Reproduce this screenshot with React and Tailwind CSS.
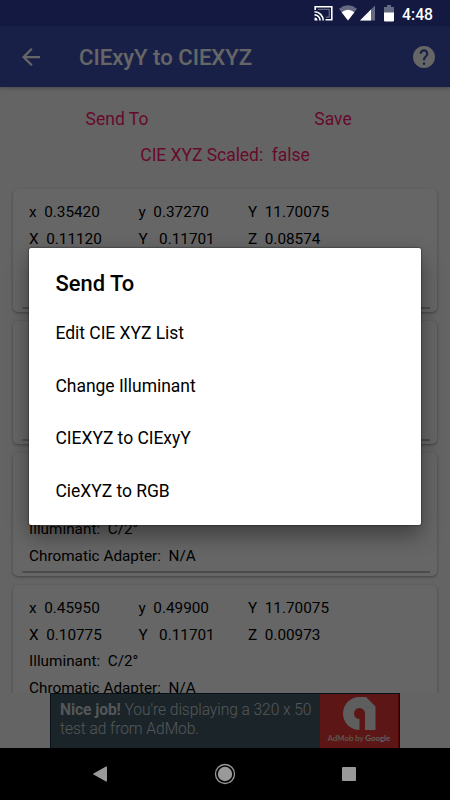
const samples = [
  { x: "0.35420", y: "0.37270", lum: "11.70075", X: "0.11120", Y: "0.11701", Z: "0.08574" },
  { x: "0.37790", y: "0.24530", lum: "11.70075", X: "0.18025", Y: "0.11701", Z: "0.17973" },
  { x: "0.30920", y: "0.33110", lum: "11.70075", X: "0.10927", Y: "0.11701", Z: "0.12712" },
  { x: "0.45950", y: "0.49900", lum: "11.70075", X: "0.10775", Y: "0.11701", Z: "0.00973" },
];

const sendOptions = [
  "Edit CIE XYZ List",
  "Change Illuminant",
  "CIEXYZ to CIExyY",
  "CieXYZ to RGB",
];

function StatusBar() {
  return (
    <div className="flex h-[26px] shrink-0 items-center justify-end bg-[#131940] pr-[17px] text-white">
      <svg className="mr-[6px] h-[16px] w-[19px]" viewBox="0 0 19 16" fill="none" stroke="currentColor">
        <path d="M1.2 5V1.7h16.6v13H11.5" strokeWidth="1.6" />
        <path d="M4 4.3h11.2v7.8h-3.4" strokeWidth=".7" opacity=".6" />
        <path d="M.5 6.8a8.7 8.7 0 0 1 8.7 8.7M.5 9.9a5.6 5.6 0 0 1 5.6 5.6" strokeWidth="1.6" />
        <path d="M.5 12.5a3 3 0 0 1 3 3h-3z" fill="currentColor" stroke="none" />
      </svg>
      <svg className="mr-[3px] h-[16px] w-[18px]" viewBox="0 0 18 16" fill="currentColor">
        <path d="M0 3.7Q9-3.2 18 3.7L9 15.5z" opacity=".35" />
        <path d="M2.6 7.2Q9 2.2 15.4 7.2L9 15.5z" />
      </svg>
      <svg className="mr-[9px] h-[16px] w-[15px]" viewBox="0 0 15 16" fill="currentColor">
        <path d="M0 15.5L15 .5v15z" opacity=".35" />
        <path d="M0 15.5L11 4.5v11z" />
      </svg>
      <svg className="mr-[8px] h-[17px] w-[10px]" viewBox="0 0 10 17" fill="currentColor">
        <path d="M3 0h4v2h3v6H0V2h3z" opacity=".35" />
        <path d="M0 7.5h10v8a1 1 0 0 1-1 1H1a1 1 0 0 1-1-1z" />
      </svg>
      <span className="pt-[3px] text-[15.7px] leading-none font-medium">4:48</span>
    </div>
  );
}

function AppBar() {
  return (
    <header className="relative z-10 flex h-[61px] shrink-0 items-center bg-[#3f51b5] pr-[15px] pl-[22px] text-white shadow-[0_2px_3px_rgba(0,0,0,0.2)]">
      <svg className="h-[18px] w-[18px]" viewBox="4 4 16 16" fill="currentColor">
        <path d="M20 11H7.83l5.59-5.59L12 4l-8 8 8 8 1.41-1.41L7.83 13H20v-2z" />
      </svg>
      <h1 className="ml-[39px] pt-[3px] text-[22.1px] font-medium">CIExyY to CIEXYZ</h1>
      <svg className="ml-auto h-[22px] w-[22px]" viewBox="2 2 20 20" fill="currentColor">
        <path d="M12 2C6.48 2 2 6.48 2 12s4.48 10 10 10 10-4.48 10-10S17.52 2 12 2zm1 17h-2v-2h2v2zm2.07-7.75l-.9.92C13.45 12.9 13 13.5 13 15h-2v-.5c0-1.1.45-2.1 1.17-2.83l1.24-1.26c.37-.36.59-.86.59-1.41 0-1.1-.9-2-2-2s-2 .9-2 2H8c0-2.21 1.79-4 4-4s4 1.79 4 4c0 .88-.36 1.68-.93 2.25z" />
      </svg>
    </header>
  );
}

function SampleCard({ sample }) {
  return (
    <div className="h-[123px] shrink-0 rounded-[5px] bg-white px-[7px] pb-[5px] shadow-[0_1px_3px_rgba(0,0,0,0.35)]">
      <div className="h-full px-[9px] pt-[10px] text-[15.3px] leading-[26.5px] whitespace-pre text-black shadow-[0_2px_1px_-0.5px_rgba(0,0,0,0.25)]">
        <div className="grid grid-cols-[109.5px_109.5px_1fr]">
          <span>{`x  ${sample.x}`}</span>
          <span>{`y  ${sample.y}`}</span>
          <span>{`Y  ${sample.lum}`}</span>
          <span>{`X  ${sample.X}`}</span>
          <span>{`Y   ${sample.Y}`}</span>
          <span>{`Z  ${sample.Z}`}</span>
        </div>
        <div>{"Illuminant:  C/2°"}</div>
        <div>{"Chromatic Adapter:  N/A"}</div>
      </div>
    </div>
  );
}

function AdBanner() {
  return (
    <div className="mx-auto flex h-[55px] w-[350px] shrink-0 border border-b-0 border-[#102f3c] bg-[#455a64]">
      <p className="w-[269px] shrink-0 pt-[7px] pl-[9px] text-[15.6px] leading-[18.5px] font-light tracking-[-0.07px] whitespace-nowrap text-[#cfd8dc]">
        <b className="font-bold">Nice job!</b> You're displaying a 320 x 50
        <br />
        test ad from AdMob.
      </p>
      <div className="flex flex-1 flex-col items-center border-r border-[#c4100e] bg-[#e53935] pt-[3px] text-[#ececec]">
        <svg className="h-[33px] w-[33px]" viewBox="0 0 33 33" fill="currentColor">
          <path d="M16.5 0H23L32.5 9.5V33H22V16.5A5.5 5.5 0 1 0 16.5 22V33A16.5 16.5 0 0 1 16.5 0z" />
          <path d="M22 10.5h10.5L22 10z" fill="#bbb" />
        </svg>
        <span className="mt-[3px] font-['Lato'] text-[7.8px] leading-[10px] whitespace-nowrap">
          AdMob by <b>Google</b>
        </span>
      </div>
    </div>
  );
}

function SendToDialog() {
  return (
    <div className="absolute top-[248px] left-[29px] z-30 h-[277px] w-[392px] rounded-[2px] bg-white pt-[20px] pl-[26.5px] text-black shadow-[0_0_2px_rgba(0,0,0,0.8),0_10px_22px_rgba(0,0,0,0.4)]">
      <h2 className="mb-[7px] text-[21.9px] leading-[32px] font-medium">Send To</h2>
      <ul>
        {sendOptions.map((option) => (
          <li key={option} className="flex h-[52.5px] items-center text-[17.5px] tracking-[-0.04px]">
            {option}
          </li>
        ))}
      </ul>
    </div>
  );
}

function NavBar() {
  return (
    <nav className="flex h-[52px] shrink-0 items-center justify-between bg-black pr-[94px] pl-[93px] text-[#999]">
      <svg className="h-[16px] w-[14px]" viewBox="0 0 14 16" fill="currentColor">
        <path d="M14 1v14a.6.6 0 0 1-1 .4L.5 8.5a.6.6 0 0 1 0-1L13 .6a.6.6 0 0 1 1 .4z" />
      </svg>
      <svg className="h-[22px] w-[22px]" viewBox="0 0 22 22" fill="currentColor">
        <circle cx="11" cy="11" r="7.2" />
        <circle cx="11" cy="11" r="9.5" fill="none" stroke="currentColor" strokeWidth="1.3" />
      </svg>
      <div className="h-[14px] w-[14px] rounded-[1px] bg-[#999]" />
    </nav>
  );
}

export default function App() {
  return (
    <div className="relative flex h-[800px] w-[450px] flex-col overflow-hidden bg-black font-['Roboto',sans-serif]">
      <StatusBar />
      <div className="relative flex h-[722px] flex-col bg-[#fafafa]">
        <AppBar />
        <div className="grid shrink-0 grid-cols-2 px-[9px] pt-[18px] text-center text-[17.5px] leading-[28px] text-[#ff1a6c]">
          <span>Send To</span>
          <span>Save</span>
        </div>
        <div className="mt-[8px] shrink-0 text-center text-[17.5px] leading-[28px] tracking-[-0.04px] whitespace-pre text-[#ff1a6c]">
          {"CIE XYZ Scaled:  false"}
        </div>
        <div className="mt-[17px] flex min-h-0 flex-1 flex-col gap-[9px] overflow-hidden px-[13px] pt-[3px]">
          {samples.map((sample) => (
            <SampleCard key={sample.x} sample={sample} />
          ))}
        </div>
        <AdBanner />
        <div className="absolute inset-0 z-20 bg-black/60" />
      </div>
      <NavBar />
      <SendToDialog />
    </div>
  );
}
